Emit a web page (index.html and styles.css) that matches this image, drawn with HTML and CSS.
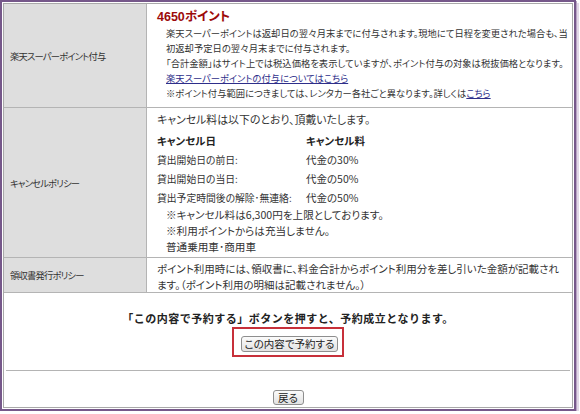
FILE: index.html
```html
<!DOCTYPE html>
<html lang="ja">
<head>
<meta charset="utf-8">
<title>予約内容の確認</title>
<link rel="stylesheet" href="styles.css">
</head>
<body>
<div class="frame">
  <div class="box">
    <div class="info">
      <div class="label">楽天スーパーポイント付与</div>
      <div class="cell cell-points">
        <div class="pts">4650ポイント</div>
        <div class="pt-notes">楽天スーパーポイントは返却日の翌々月末までに付与されます。現地にて日程を変更された場合も、当<br>初返却予定日の翌々月末までに付与されます。<br>「合計金額」はサイト上では税込価格を表示していますが、ポイント付与の対象は税抜価格となります。<br><a href="#">楽天スーパーポイントの付与についてはこちら</a><br>※ポイント付与範囲につきましては、レンタカー各社ごと異なります。詳しくは<a href="#">こちら</a></div>
      </div>

      <div class="label">キャンセルポリシー</div>
      <div class="cell cell-cancel">
        <div class="lead">キャンセル料は以下のとおり、頂戴いたします。</div>
        <div class="fees">
          <div class="fee-h">キャンセル日</div><div class="fee-h">キャンセル料</div>
          <div>貸出開始日の前日:</div><div class="num">代金の30%</div>
          <div>貸出開始日の当日:</div><div class="num">代金の50%</div>
          <div>貸出予定時間後の解除･無連絡:</div><div class="num">代金の50%</div>
        </div>
        <div class="fee-notes">※キャンセル料は6,300円を上限としております。<br>※利用ポイントからは充当しません。<br>普通乗用車･商用車</div>
      </div>

      <div class="label">領収書発行ポリシー</div>
      <div class="cell cell-receipt">ポイント利用時には、領収書に、料金合計からポイント利用分を差し引いた金額が記載され<br>ます。（ポイント利用の明細は記載されません。）</div>
    </div>

    <div class="confirm">
      <p class="msg">「この内容で予約する」ボタンを押すと、予約成立となります。</p>
      <div class="mark"><button class="btn btn-reserve" type="button">この内容で予約する</button></div>
    </div>
    <hr class="sep">
    <div class="back"><button class="btn btn-back" type="button">戻る</button></div>
  </div>
</div>
</body>
</html>
```
FILE: styles.css
```css
* { box-sizing: border-box; }
html, body { margin: 0; padding: 0; background: #ffffff; }
body {
  font-family: "Noto Sans CJK JP", "Noto Sans", sans-serif;
  color: #333333;
  font-size: 9.3px;
  font-feature-settings: "palt";
}
.frame {
  width: 576px;
  height: 411px;
  border: 2px solid #76588a;
  padding: 1px;
  background: #ffffff;
  box-shadow: 1px 1px 0 #b9a5c4, 3px 3px 0 #e2d8e7;
}
.box {
  height: 100%;
  border: 1px solid #a9a9a9;
  display: flex;
  flex-direction: column;
}
.info {
  display: grid;
  grid-template-columns: 143px 1fr;
}
.label {
  background: #dedede;
  border-right: 1px solid #b4b4b4;
  border-bottom: 1px solid #b4b4b4;
  display: flex;
  align-items: center;
  padding-left: 6px;
  white-space: nowrap;
  font-size: 9.3px;
  letter-spacing: -0.8px;
}
.cell {
  border-bottom: 1px solid #b4b4b4;
  padding-left: 10px;
  white-space: nowrap;
}
.cell-points { padding-top: 5px; padding-bottom: 6px; }
.pts {
  font-family: "Liberation Sans", "Noto Sans CJK JP", sans-serif;
  color: #9c0a0a;
  font-weight: bold;
  font-size: 12.5px;
  line-height: 17px;
}
.pt-notes {
  margin-left: 9px;
  line-height: 15px;
}
.pt-notes a, .pt-notes a:visited { color: #2e2e8a; text-decoration: underline; }
.cell-cancel { padding-top: 2px; padding-bottom: 2px; }
.lead {
  font-size: 10.9px;
  line-height: 18px;
}
.fees {
  margin-top: 3px;
  display: grid;
  grid-template-columns: 149px 1fr;
  grid-auto-rows: 19px;
  align-items: center;
  font-size: 9.8px;
}
.fee-h { font-weight: bold; font-size: 10.5px; color: #222222; }
.num { font-size: 10.5px; }
.fee-notes {
  margin-left: 9px;
  line-height: 16px;
  font-size: 10.6px;
}
.cell-receipt {
  padding-top: 3px;
  line-height: 15.5px;
  font-size: 10.5px;
}
.confirm {
  margin-top: 16px;
  display: flex;
  flex-direction: column;
  align-items: center;
}
.msg {
  margin: 0;
  font-size: 11px;
  letter-spacing: 0.5px;
  font-weight: bold;
  line-height: 18px;
  color: #222222;
  font-feature-settings: normal;
}
.mark {
  border: 2px solid #c7303a;
  padding: 7px 4px 3px 7px;
  display: flex;
}
.btn {
  font-family: "Noto Sans CJK JP", "Noto Sans", sans-serif;
  font-feature-settings: "palt";
  font-size: 10.5px;
  color: #222222;
  border: 1px solid #8e8e8e;
  border-radius: 3px;
  background: linear-gradient(#fbfbfb, #e2e2e2);
  padding: 0;
  margin: 0;
  line-height: 14px;
}
.btn-reserve { width: 97px; height: 16px; }
.sep {
  margin: 13px 2px 0 2px;
  border: 0;
  border-top: 1px solid #b4b4b4;
  height: 0;
}
.back {
  margin-top: 19px;
  display: flex;
  justify-content: center;
}
.btn-back { width: 31px; height: 15px; }
```
